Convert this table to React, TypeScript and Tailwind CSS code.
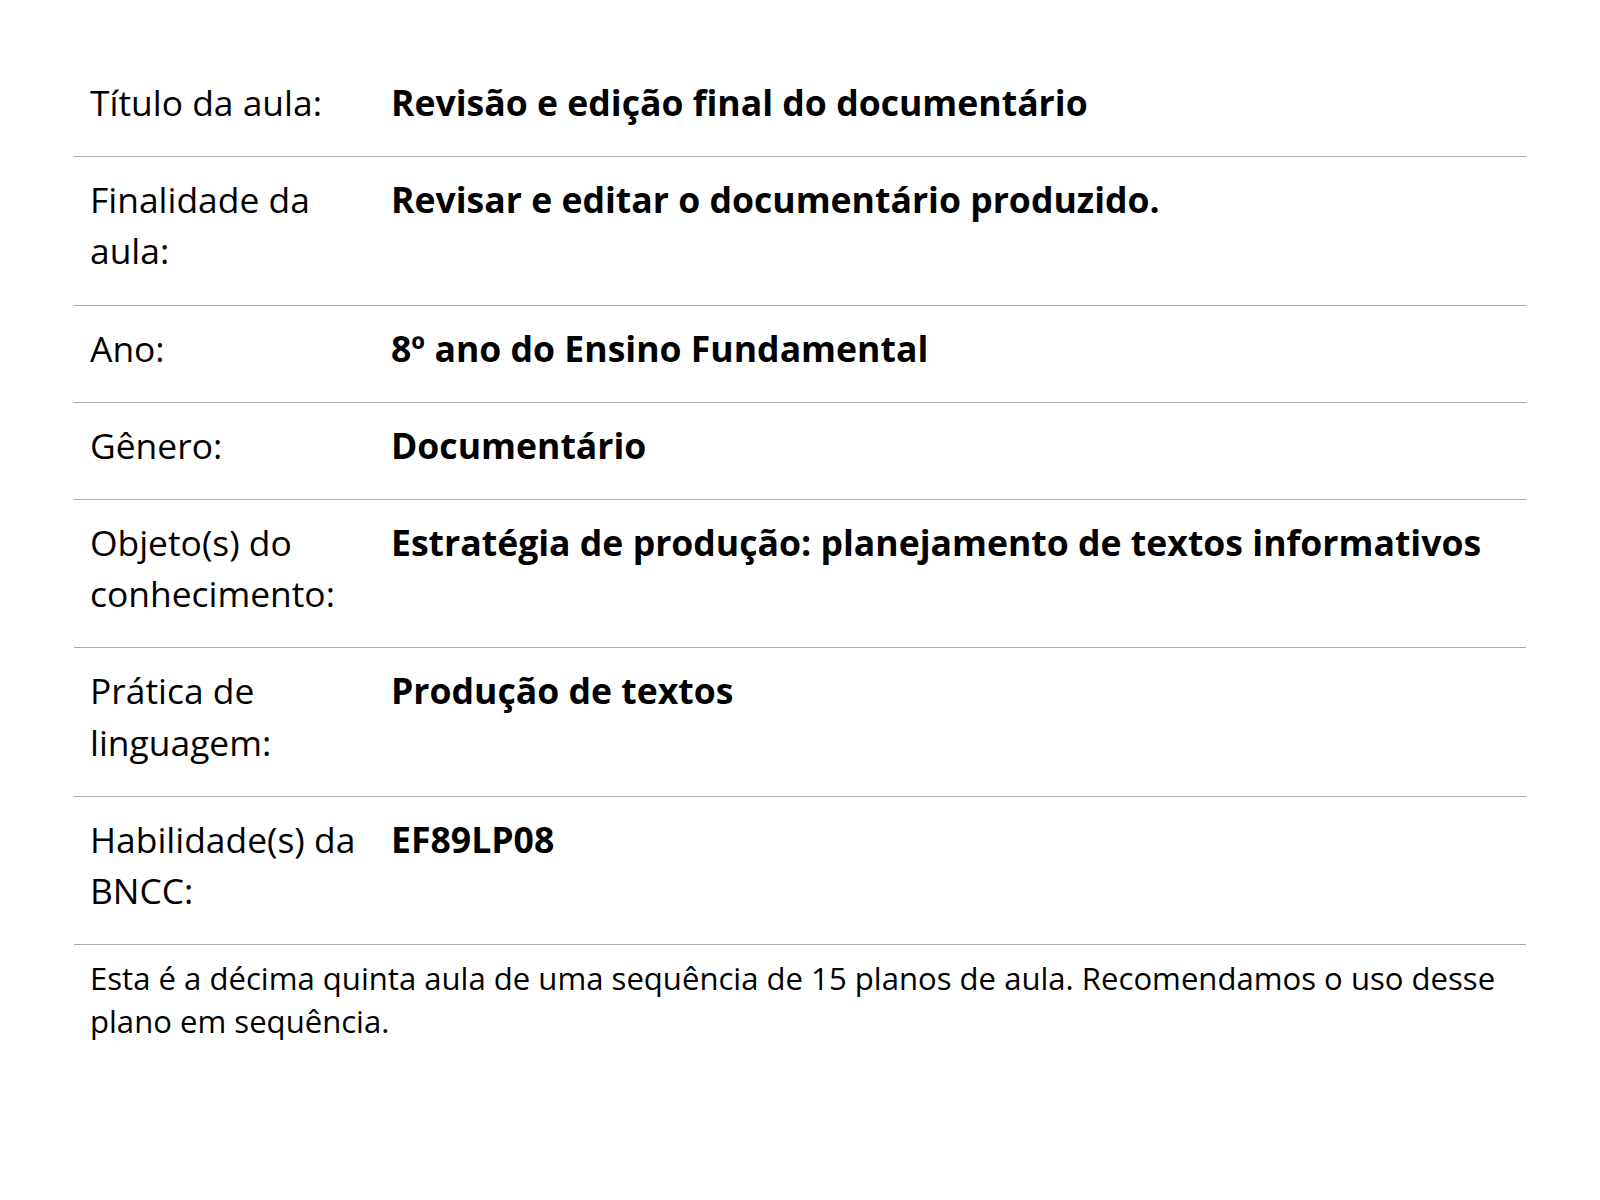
const rows: { label: string; value: string }[] = [
  { label: 'Título da aula:', value: 'Revisão e edição final do documentário' },
  { label: 'Finalidade da aula:', value: 'Revisar e editar o documentário produzido.' },
  { label: 'Ano:', value: '8º ano do Ensino Fundamental' },
  { label: 'Gênero:', value: 'Documentário' },
  { label: 'Objeto(s) do conhecimento:', value: 'Estratégia de produção: planejamento de textos informativos' },
  { label: 'Prática de linguagem:', value: 'Produção de textos' },
  { label: 'Habilidade(s) da BNCC:', value: 'EF89LP08' },
];

export default function App() {
  return (
    <div className="min-h-screen bg-white text-black font-['Open_Sans',sans-serif] pt-[60px]">
      <div className="mx-auto w-[1452px]">
        <table className="w-full border-collapse">
          <tbody>
            {rows.map((row) => (
              <tr key={row.label} className="border-b border-[#aaaaaa]">
                <td className="w-[301px] px-4 pt-[17px] pb-[28px] align-top text-[35.4px] leading-[51.2px] font-normal">
                  {row.label}
                </td>
                <td className="px-4 pt-[17px] pb-[28px] align-top text-[35.6px] leading-[51.2px] font-bold">
                  {row.value}
                </td>
              </tr>
            ))}
          </tbody>
        </table>
        <p className="px-4 pt-[12px] text-[31.1px] leading-[43px]">
          Esta é a décima quinta aula de uma sequência de 15 planos de aula. Recomendamos o uso desse plano em sequência.
        </p>
      </div>
    </div>
  );
}
